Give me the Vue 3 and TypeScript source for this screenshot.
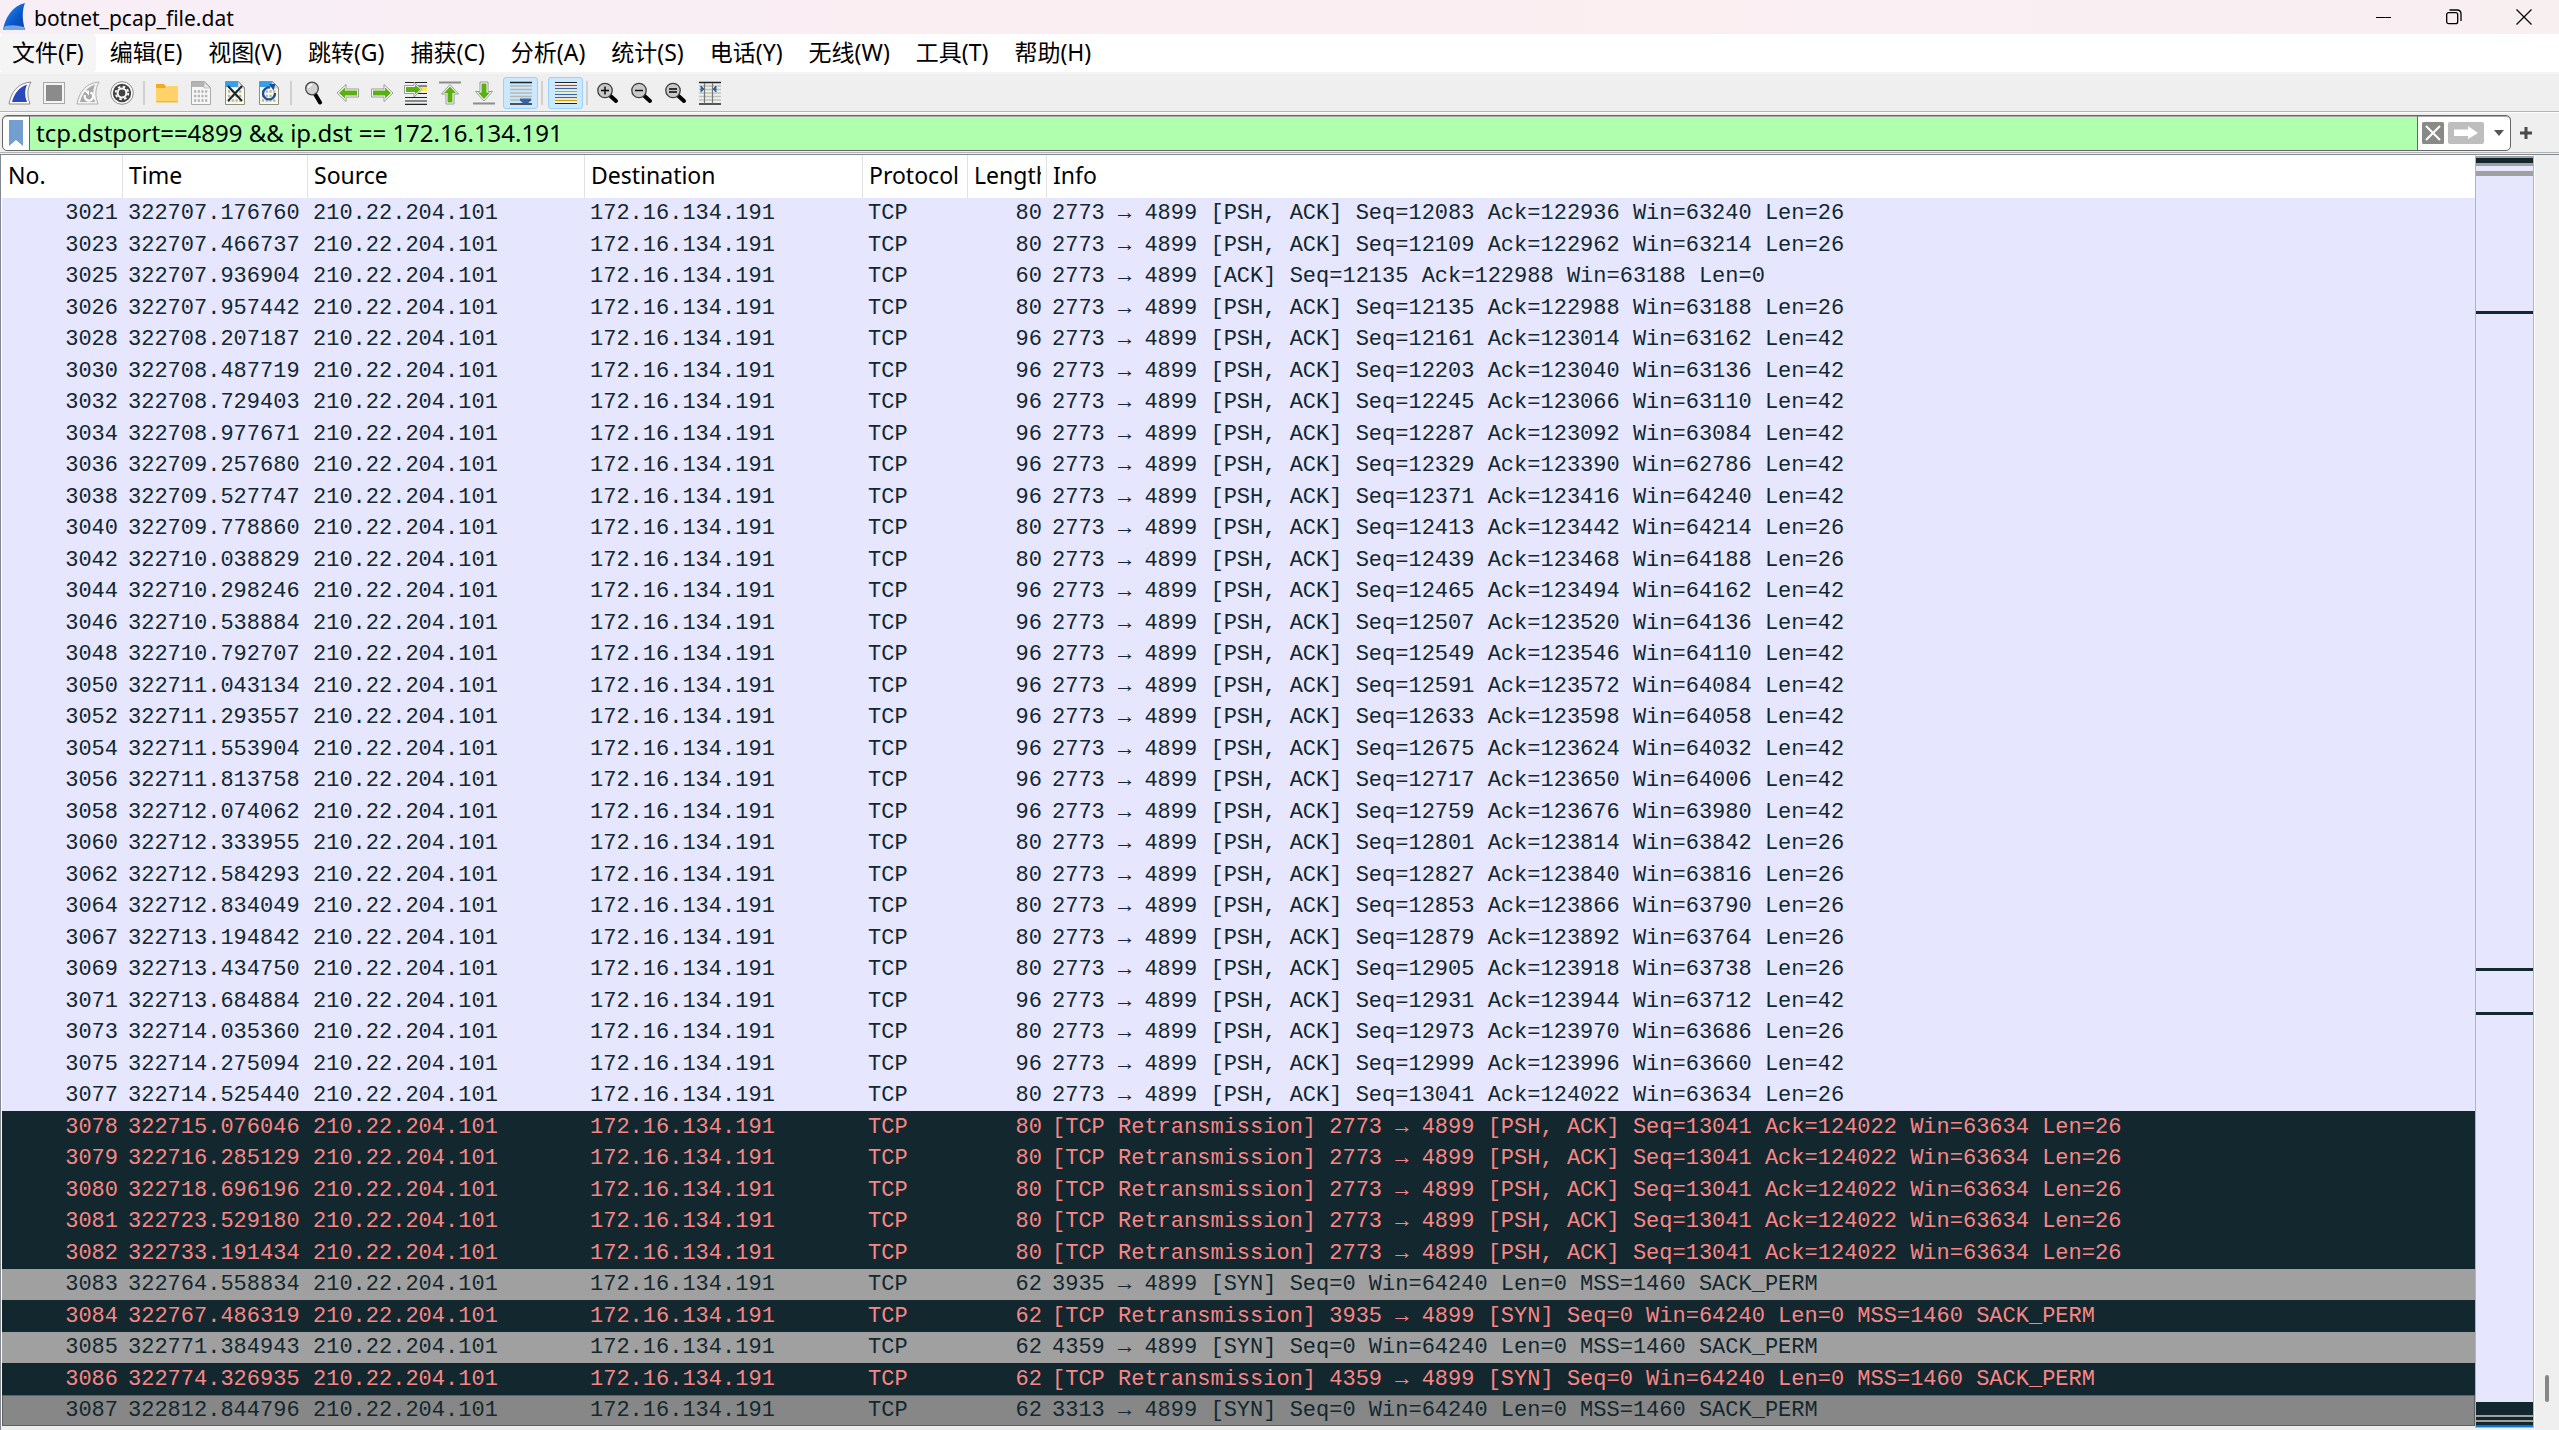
<script setup lang="ts">
import { ref } from 'vue'

type Kind = 'tcp' | 'bad' | 'syn' | 'selected'

interface Packet {
  no: number
  time: string
  length: number
  info: string
  kind: Kind
}

const fileName = 'botnet_pcap_file.dat'
const source = '210.22.204.101'
const destination = '172.16.134.191'
const filter = ref('tcp.dstport==4899 && ip.dst == 172.16.134.191')

const menus = [
  '文件(F)', '编辑(E)', '视图(V)', '跳转(G)', '捕获(C)', '分析(A)',
  '统计(S)', '电话(Y)', '无线(W)', '工具(T)', '帮助(H)',
]

// number, time, frame length, seq, ack, window, payload length
const acks: [number, string, number, number, number, number, number][] = [
  [3021, '322707.176760', 80, 12083, 122936, 63240, 26],
  [3023, '322707.466737', 80, 12109, 122962, 63214, 26],
  [3025, '322707.936904', 60, 12135, 122988, 63188, 0],
  [3026, '322707.957442', 80, 12135, 122988, 63188, 26],
  [3028, '322708.207187', 96, 12161, 123014, 63162, 42],
  [3030, '322708.487719', 96, 12203, 123040, 63136, 42],
  [3032, '322708.729403', 96, 12245, 123066, 63110, 42],
  [3034, '322708.977671', 96, 12287, 123092, 63084, 42],
  [3036, '322709.257680', 96, 12329, 123390, 62786, 42],
  [3038, '322709.527747', 96, 12371, 123416, 64240, 42],
  [3040, '322709.778860', 80, 12413, 123442, 64214, 26],
  [3042, '322710.038829', 80, 12439, 123468, 64188, 26],
  [3044, '322710.298246', 96, 12465, 123494, 64162, 42],
  [3046, '322710.538884', 96, 12507, 123520, 64136, 42],
  [3048, '322710.792707', 96, 12549, 123546, 64110, 42],
  [3050, '322711.043134', 96, 12591, 123572, 64084, 42],
  [3052, '322711.293557', 96, 12633, 123598, 64058, 42],
  [3054, '322711.553904', 96, 12675, 123624, 64032, 42],
  [3056, '322711.813758', 96, 12717, 123650, 64006, 42],
  [3058, '322712.074062', 96, 12759, 123676, 63980, 42],
  [3060, '322712.333955', 80, 12801, 123814, 63842, 26],
  [3062, '322712.584293', 80, 12827, 123840, 63816, 26],
  [3064, '322712.834049', 80, 12853, 123866, 63790, 26],
  [3067, '322713.194842', 80, 12879, 123892, 63764, 26],
  [3069, '322713.434750', 80, 12905, 123918, 63738, 26],
  [3071, '322713.684884', 96, 12931, 123944, 63712, 42],
  [3073, '322714.035360', 80, 12973, 123970, 63686, 26],
  [3075, '322714.275094', 96, 12999, 123996, 63660, 42],
  [3077, '322714.525440', 80, 13041, 124022, 63634, 26],
]

const resent = '[TCP Retransmission] 2773 → 4899 [PSH, ACK] Seq=13041 Ack=124022 Win=63634 Len=26'
const syn = (port: number) => `${port} → 4899 [SYN] Seq=0 Win=64240 Len=0 MSS=1460 SACK_PERM`

const packets: Packet[] = [
  ...acks.map(([no, time, length, seq, ack, win, len]): Packet => ({
    no,
    time,
    length,
    info: `2773 → 4899 ${len ? '[PSH, ACK]' : '[ACK]'} Seq=${seq} Ack=${ack} Win=${win} Len=${len}`,
    kind: 'tcp',
  })),
  { no: 3078, time: '322715.076046', length: 80, info: resent, kind: 'bad' },
  { no: 3079, time: '322716.285129', length: 80, info: resent, kind: 'bad' },
  { no: 3080, time: '322718.696196', length: 80, info: resent, kind: 'bad' },
  { no: 3081, time: '322723.529180', length: 80, info: resent, kind: 'bad' },
  { no: 3082, time: '322733.191434', length: 80, info: resent, kind: 'bad' },
  { no: 3083, time: '322764.558834', length: 62, info: syn(3935), kind: 'syn' },
  { no: 3084, time: '322767.486319', length: 62, info: `[TCP Retransmission] ${syn(3935)}`, kind: 'bad' },
  { no: 3085, time: '322771.384943', length: 62, info: syn(4359), kind: 'syn' },
  { no: 3086, time: '322774.326935', length: 62, info: `[TCP Retransmission] ${syn(4359)}`, kind: 'bad' },
  { no: 3087, time: '322812.844796', length: 62, info: syn(3313), kind: 'selected' },
]

// share of the capture and colour of each stripe in the overview strip
const stripes: [number, string][] = [
  [2, 'gray'], [5, 'dark'], [3, 'gray'], [5, 'lav'], [5, 'gray'], [135, 'lav'],
  [3, 'dark'], [654, 'lav'], [3, 'dark'], [41, 'lav'], [3, 'dark'], [387, 'lav'],
  [13, 'dark'], [2, 'gray'], [3, 'dark'], [2, 'gray'], [3, 'dark'], [2, 'blue'],
]
</script>

<template>
  <div class="window">
    <header class="titlebar">
      <svg class="logo" viewBox="0 0 24 30" aria-hidden="true">
        <defs>
          <linearGradient id="fin" x1="0" y1="0" x2="1" y2="1">
            <stop offset="0" stop-color="#2b9af0" />
            <stop offset="0.6" stop-color="#0a55c8" />
            <stop offset="1" stop-color="#0a3fa6" />
          </linearGradient>
        </defs>
        <path d="M1 28C3 16 10 4 23 1C20 8 20 18 23 28Z" fill="url(#fin)" />
        <path d="M1 28L3 24Q13 22 22 25L23 28Z" fill="#6fa4e8" />
      </svg>
      <h1>{{ fileName }}</h1>
      <div class="win-buttons">
        <button type="button" aria-label="最小化">
          <svg viewBox="0 0 16 16"><path d="M0 8.5H15" stroke="#000" /></svg>
        </button>
        <button type="button" aria-label="还原">
          <svg viewBox="0 0 16 16" fill="none" stroke="#000" stroke-width="1.3">
            <rect x="0.7" y="3.7" width="11" height="11" rx="2" />
            <path d="M3.5 1H11Q15 1 15 5V12" />
          </svg>
        </button>
        <button type="button" aria-label="关闭">
          <svg viewBox="0 0 16 16"><path d="M0.5 0.5L15.5 15.5M15.5 0.5L0.5 15.5" stroke="#000" stroke-width="1.2" /></svg>
        </button>
      </div>
    </header>

    <nav class="menubar">
      <button v-for="(m, i) in menus" :key="m" type="button" :class="{ hover: i === 0 }">{{ m }}</button>
    </nav>

    <div class="toolbar" role="toolbar">
      <button type="button" aria-label="开始捕获">
        <svg viewBox="0 0 24 24">
          <path d="M1 23C3 12 9 2 23 1C19 8 19 15 22 23Z" fill="#fff" stroke="#8a8a8a" />
          <path d="M4 21C6 13 11 6 19 3.5C16.500 9 16.500 15 19 21Z" fill="#2a48bd" />
        </svg>
      </button>
      <button type="button" aria-label="停止捕获">
        <svg viewBox="0 0 24 24">
          <rect x="1.5" y="1.5" width="21" height="21" fill="#f4f4f4" stroke="#a8a8a8" />
          <rect x="4" y="4" width="16" height="16" fill="#8b8b8b" />
        </svg>
      </button>
      <button type="button" aria-label="重新开始">
        <svg viewBox="0 0 24 24">
          <path d="M1 23C3 12 9 2 23 1C19 8 19 15 22 23Z" fill="#f4f4f4" stroke="#b0b0b0" />
          <path d="M4 21C6 13 11 6 19 3.5C16.5 9 16.5 15 19 21Z" fill="#a9a9a9" />
          <path d="M9 14A4.200 4.200 0 1 0 14.500 11.500" fill="none" stroke="#fff" stroke-width="2.2" />
          <path d="M8 9.5H13V14.5Z" fill="#fff" />
        </svg>
      </button>
      <button type="button" aria-label="捕获选项">
        <svg viewBox="0 0 24 24">
          <circle cx="12" cy="12" r="11.3" fill="#fff" stroke="#8a8a8a" />
          <circle cx="12" cy="12" r="9.2" fill="#434343" />
          <circle cx="12" cy="12" r="5.4" fill="#fff" />
          <circle cx="12" cy="12" r="6.3" fill="none" stroke="#fff" stroke-width="1.8" stroke-dasharray="2.5 2.45" />
          <circle cx="12" cy="12" r="3.4" fill="#434343" />
        </svg>
      </button>
      <i class="sep"></i>
      <button type="button" aria-label="打开">
        <svg viewBox="0 0 24 24">
          <path d="M1 3H9L11 5.5V9H1Z" fill="#f5a91c" />
          <path d="M1 7H10L12 5H23V21H1Z" fill="#ffd26a" />
          <path d="M1 20H23V21.5H1Z" fill="#f3b93f" />
        </svg>
      </button>
      <button v-for="k in ['保存', '关闭文件', '重新加载']" :key="k" type="button" :aria-label="k">
        <svg viewBox="0 0 24 24">
          <path d="M2.5 0.5H15.5L21.5 6.5V23.5H2.5Z" :fill="k === '保存' ? '#f7f7f7' : '#fbfbe8'" :stroke="k === '保存' ? '#aaa' : '#8d8f80'" />
          <path d="M3 1H15V6H3Z" :fill="k === '保存' ? '#b4b4b4' : '#35a0e8'" />
          <path d="M15 1V7H21Z" fill="#e8e8e8" stroke="#aaa" stroke-width="0.6" />
          <path d="M5 10.5H19M5 15H19M5 19.500H19" stroke="#b2b2b2" stroke-width="2.6" stroke-dasharray="2.2 1.5" />
          <path v-if="k === '关闭文件'" d="M5 5L19 20M19 5L5 20" stroke="#1c242c" stroke-width="2" />
          <g v-if="k === '重新加载'">
            <path d="M13 6.5A6 6 0 1 0 18 12" fill="none" stroke="#1d4f9a" stroke-width="2.4" />
            <path d="M12 3L18.5 3L16.5 9.5Z" fill="#1d4f9a" />
          </g>
        </svg>
      </button>
      <i class="sep"></i>
      <button type="button" aria-label="查找分组">
        <svg viewBox="0 0 24 24">
          <path d="M13 13L18 21.5" stroke="#000" stroke-width="4" stroke-linecap="round" />
          <circle cx="10" cy="7.5" r="6.3" fill="#d2d2d2" stroke="#444" stroke-width="1.3" />
          <path d="M6.5 7A4 4 0 0 1 10 3.5" fill="none" stroke="#fff" stroke-width="1.5" />
        </svg>
      </button>
      <button type="button" aria-label="上一个">
        <svg viewBox="0 0 24 24"><path class="halo" d="M1 12L10 3.5V8H22.500V16H10V20.5Z" /><path class="green" d="M3 12L9 6.5V9.500H21V14.5H9V17.5Z" /></svg>
      </button>
      <button type="button" aria-label="下一个">
        <svg viewBox="0 0 24 24"><path class="halo" d="M23 12L14 3.5V8H1.500V16H14V20.5Z" /><path class="green" d="M21 12L15 6.5V9.500H3V14.5H15V17.5Z" /></svg>
      </button>
      <button type="button" aria-label="转到分组">
        <svg viewBox="0 0 24 24">
          <path d="M1 1.5H23M1 16.5H23M1 20H23M1 23.3H23M12 5H23M12 12.5H23" stroke="#1e2326" stroke-width="1.2" />
          <rect x="16" y="6" width="7" height="4" fill="#fce94f" />
          <path class="halo" d="M18 8.5L10 1V4.500H0.5V12.5H10V16Z" />
          <path class="green" d="M16.500 8.5L11 3.500V6H2V11H11V13.5Z" />
        </svg>
      </button>
      <button type="button" aria-label="首个分组">
        <svg viewBox="0 0 24 24">
          <path d="M1 1.5H23" stroke="#8d8d8d" stroke-width="2" />
          <path class="halo" d="M12 3.5L20.5 13H16V23H8V13H3.5Z" />
          <path class="green" d="M12 5.5L18 12H14.5V21.500H9.5V12H6Z" />
        </svg>
      </button>
      <button type="button" aria-label="最新分组">
        <svg viewBox="0 0 24 24">
          <path d="M1 22.5H23" stroke="#8d8d8d" stroke-width="2" />
          <path class="halo" d="M12 20L20.5 10.500H16V1H8V10.500H3.5Z" />
          <path class="green" d="M12 18L18 11.500H14.5V2.500H9.5V11.500H6Z" />
        </svg>
      </button>
      <button type="button" class="checked" aria-pressed="true" aria-label="自动滚动">
        <svg viewBox="0 0 24 24">
          <path d="M1 1.5H23M1 23H23" stroke="#1e2326" stroke-width="1.5" />
          <path d="M1 5H23M1 8.5H23M1 12H23M1 15.5H23M1 19H23" stroke="#b5b8b0" stroke-width="1.3" />
          <path d="M11 17.5H22V19.5L18.5 22.500H14.5L11 19.5Z" fill="#3465a4" />
        </svg>
      </button>
      <i class="sep tight"></i>
      <button type="button" class="checked" aria-pressed="true" aria-label="着色规则">
        <svg viewBox="0 0 24 24" stroke-width="1.2">
          <rect x="1" y="1" width="22" height="22" fill="#f2f4f2" />
          <path d="M1 1.5H23M1 22.500H23" stroke="#1e2326" />
          <path d="M1 4.5H23" stroke="#ef2929" />
          <path d="M1 7.5H23" stroke="#3465a4" />
          <path d="M1 10.5H23" stroke="#73d216" />
          <path d="M1 13.5H23" stroke="#3465a4" />
          <path d="M1 16.5H23" stroke="#75507b" />
          <path d="M1 19.5H23" stroke="#c4a000" />
        </svg>
      </button>
      <i class="sep tight"></i>
      <button v-for="z in ['放大', '缩小', '正常大小']" :key="z" type="button" :aria-label="z">
        <svg viewBox="0 0 24 24">
          <path d="M14.5 15L20 20" stroke="#000" stroke-width="4" stroke-linecap="round" />
          <circle cx="9" cy="9.5" r="7.2" fill="#c9c9c9" stroke="#3c3c3c" stroke-width="1.3" />
          <path v-if="z === '放大'" d="M5 9.5H13M9 5.5V13.5" stroke="#000" stroke-width="1.4" />
          <path v-else-if="z === '缩小'" d="M5 9.5H13" stroke="#000" stroke-width="1.4" />
          <path v-else d="M5 8H13M5 11H13" stroke="#000" stroke-width="1.4" />
        </svg>
      </button>
      <button type="button" aria-label="调整列宽">
        <svg viewBox="0 0 24 24">
          <path d="M1 5H23M1 8.5H23M1 12H23M1 15.5H23M1 19H23" stroke="#bfc2b8" stroke-width="1.3" />
          <path d="M1 1.5H23M1 23H23" stroke="#1e2326" stroke-width="1.5" />
          <path d="M6.5 2V22.5M14.5 2V22.5" stroke="#777a74" stroke-width="1.2" />
          <path d="M3 5L6 8L3 11ZM18 5L15 8L18 11Z" fill="#3465a4" stroke="#3465a4" />
        </svg>
      </button>
    </div>

    <form class="filterbar" @submit.prevent>
      <div class="filterbox">
        <button type="button" class="bookmark" aria-label="书签">
          <svg viewBox="0 0 14 26"><path d="M0 0H14V26L7 20L0 26Z" fill="#729fcf" /></svg>
        </button>
        <input v-model="filter" type="text" aria-label="显示过滤器" spellcheck="false" />
        <div class="actions">
          <button type="button" aria-label="清除">
            <svg width="22" height="22" viewBox="0 0 22 22">
              <rect width="22" height="22" rx="1.5" fill="#888a85" />
              <path d="M4 4L18 18M18 4L4 18" stroke="#fff" stroke-width="2" />
            </svg>
          </button>
          <button type="submit" aria-label="应用">
            <svg width="36" height="22" viewBox="0 0 36 22">
              <rect width="36" height="22" rx="2" fill="#bebebe" />
              <path d="M6 7.5H20V4L30 11L20 17V14H6Z" fill="#fff" />
            </svg>
          </button>
          <button type="button" class="caret" aria-label="最近使用">
            <svg width="10" height="6" viewBox="0 0 10 6"><path d="M0 0H10L5 6Z" fill="#555" /></svg>
          </button>
        </div>
      </div>
      <button type="button" class="plus" aria-label="添加">
        <svg width="12" height="12" viewBox="0 0 12 12"><path d="M6 0V12M0 6H12" stroke="#4a4a4a" stroke-width="3" /></svg>
      </button>
    </form>

    <main class="packets">
      <table>
        <colgroup>
          <col class="c-no" /><col class="c-time" /><col class="c-src" /><col class="c-dst" />
          <col class="c-proto" /><col class="c-len" /><col />
        </colgroup>
        <thead>
          <tr>
            <th scope="col">No.</th>
            <th scope="col">Time</th>
            <th scope="col">Source</th>
            <th scope="col">Destination</th>
            <th scope="col">Protocol</th>
            <th scope="col"><span>Length</span></th>
            <th scope="col">Info</th>
          </tr>
        </thead>
        <tbody>
          <tr v-for="p in packets" :key="p.no" :class="p.kind">
            <td class="num">{{ p.no }}</td>
            <td>{{ p.time }}</td>
            <td>{{ source }}</td>
            <td>{{ destination }}</td>
            <td>TCP</td>
            <td class="num">{{ p.length }}</td>
            <td>{{ p.info }}</td>
          </tr>
        </tbody>
      </table>
      <div class="overview">
        <div v-for="(s, i) in stripes" :key="i" :class="s[1]" :style="{ flexGrow: s[0] }"></div>
      </div>
      <div class="scrollbar"><div class="thumb"></div></div>
    </main>
  </div>
</template>

<style>
body {
  background: #fff;
}
</style>

<style scoped>
.window {
  display: flex;
  flex-direction: column;
  min-height: 100vh;
  background: #efefef;
  color: #000;
  font-family: "Noto Sans", "Noto Sans CJK SC", sans-serif;
  font-size: 23px;
}
button {
  display: flex;
  align-items: center;
  justify-content: center;
  margin: 0;
  padding: 0;
  border: 0;
  background: none;
  color: inherit;
  font: inherit;
}
svg {
  display: block;
}

.titlebar {
  display: flex;
  align-items: center;
  height: 34px;
  padding-left: 2px;
  background: linear-gradient(90deg, #f8eef6, #fbeef2 50%, #f8eff1);
}
.logo {
  width: 24px;
  height: 30px;
}
.titlebar h1 {
  flex: 1;
  margin: 0;
  padding: 2px 0 0 8px;
  font-size: 21px;
  font-weight: 400;
  line-height: 32px;
}
.win-buttons {
  display: flex;
}
.win-buttons button {
  width: 70px;
  height: 34px;
}
.win-buttons svg {
  width: 16px;
  height: 16px;
}

.menubar {
  display: flex;
  gap: 2px;
  height: 38px;
  background: #fff;
}
.menubar button {
  padding: 0 12px 2px;
  border-radius: 4px;
  line-height: 36px;
  white-space: nowrap;
}
.menubar .hover {
  background: #f5f5f5;
}

.toolbar {
  display: flex;
  align-items: center;
  height: 36px;
  padding: 1px 3px 0;
  border-top: 2px solid #f4f4f4;
  border-bottom: 1px solid #b4b4b4;
}
.toolbar button {
  width: 34px;
  height: 32px;
}
.toolbar svg {
  width: 24px;
  height: 24px;
}
.toolbar .checked {
  width: 35px;
  margin-left: 2px;
  border: 1px solid #99d1ff;
  border-radius: 3px;
  background: #cce8ff;
}
.sep {
  width: 2px;
  height: 24px;
  margin: 0 5px 0 4px;
  background: #d0d0d0;
}
.sep.tight {
  margin: 0 3px;
}
.halo {
  fill: #fff;
  stroke: #999;
  stroke-linejoin: round;
}
.green {
  fill: #59b010;
}

.filterbar {
  display: flex;
  align-items: center;
  height: 36px;
  padding: 2px 20px 1px 2px;
  border-top: 1px solid #fff;
  border-bottom: 1px solid #b4b4b4;
}
.filterbox {
  display: flex;
  flex: 1;
  box-sizing: border-box;
  height: 36px;
  overflow: hidden;
  border: 1px solid #666;
  border-radius: 5px;
  background: #fff;
  box-shadow: inset 0 1px 0 #aaa;
}
.bookmark {
  width: 27px;
  border-right: 1px solid #666;
}
.bookmark svg {
  width: 14px;
  height: 26px;
}
.filterbox input {
  flex: 1;
  min-width: 0;
  margin: 1px 0 0;
  padding: 0 6px 2px;
  border: 0;
  outline: 0;
  background: #afffaf;
  color: #000;
  font: inherit;
  font-size: 24px;
}
.actions {
  display: flex;
  align-items: center;
  gap: 4px;
  padding-left: 4px;
  border-left: 1px solid #666;
}
.caret {
  width: 22px;
}
.plus {
  width: 12px;
  margin: 0 7px 0 9px;
}

.packets {
  display: flex;
  flex: 1;
  align-items: stretch;
  margin-top: 1px;
  border-top: 1px solid #828790;
  border-left: 1px solid #828790;
}
table {
  flex: 1;
  width: 100%;
  min-width: 0;
  align-self: flex-start;
  border-left: 1px solid #fff;
  border-collapse: separate;
  border-spacing: 0;
  table-layout: fixed;
  background: #fff;
}
.c-no { width: 121px; }
.c-time { width: 185px; }
.c-src { width: 277px; }
.c-dst { width: 278px; }
.c-proto { width: 105px; }
.c-len { width: 79px; }
th {
  box-sizing: border-box;
  height: 43px;
  padding: 0 5px 4px 6px;
  overflow: hidden;
  border-right: 1px solid #e2e2e2;
  font-weight: 400;
  line-height: 38px;
  text-align: left;
  white-space: nowrap;
}
th:last-child {
  border-right: 0;
}
th span {
  display: block;
  overflow: hidden;
}
td {
  height: 31px;
  padding: 0 5px;
  overflow: hidden;
  font-family: "Liberation Mono", monospace;
  font-size: 22px;
  line-height: 31px;
  white-space: nowrap;
}
tr:nth-child(even) td {
  height: 32px;
}
.num {
  text-align: right;
}
.tcp {
  background: #e6e6ff;
  color: #12272e;
}
.bad {
  background: #12272e;
  color: #f78787;
}
.syn {
  background: #a0a0a0;
  color: #12272e;
}
.selected {
  outline: 1px solid #606060;
  outline-offset: -1px;
  background: #878787;
  color: #12272e;
}

.overview {
  display: flex;
  flex: none;
  flex-direction: column;
  box-sizing: border-box;
  width: 59px;
  margin-bottom: 2px;
  border: 1px solid #b4b4b4;
  border-top-color: #fff;
}
.overview div {
  flex-basis: 0;
}
.gray { background: #a0a0a0; }
.dark { background: #12272e; }
.lav { background: #e6e6ff; }
.blue { background: #0078d7; }

.scrollbar {
  display: flex;
  flex: none;
  flex-direction: column;
  justify-content: flex-end;
  align-items: center;
  box-sizing: border-box;
  width: 25px;
  padding-bottom: 28px;
  border-left: 1px solid #fff;
}
.thumb {
  width: 4px;
  height: 27px;
  border-radius: 2px;
  background: #868686;
}
</style>
